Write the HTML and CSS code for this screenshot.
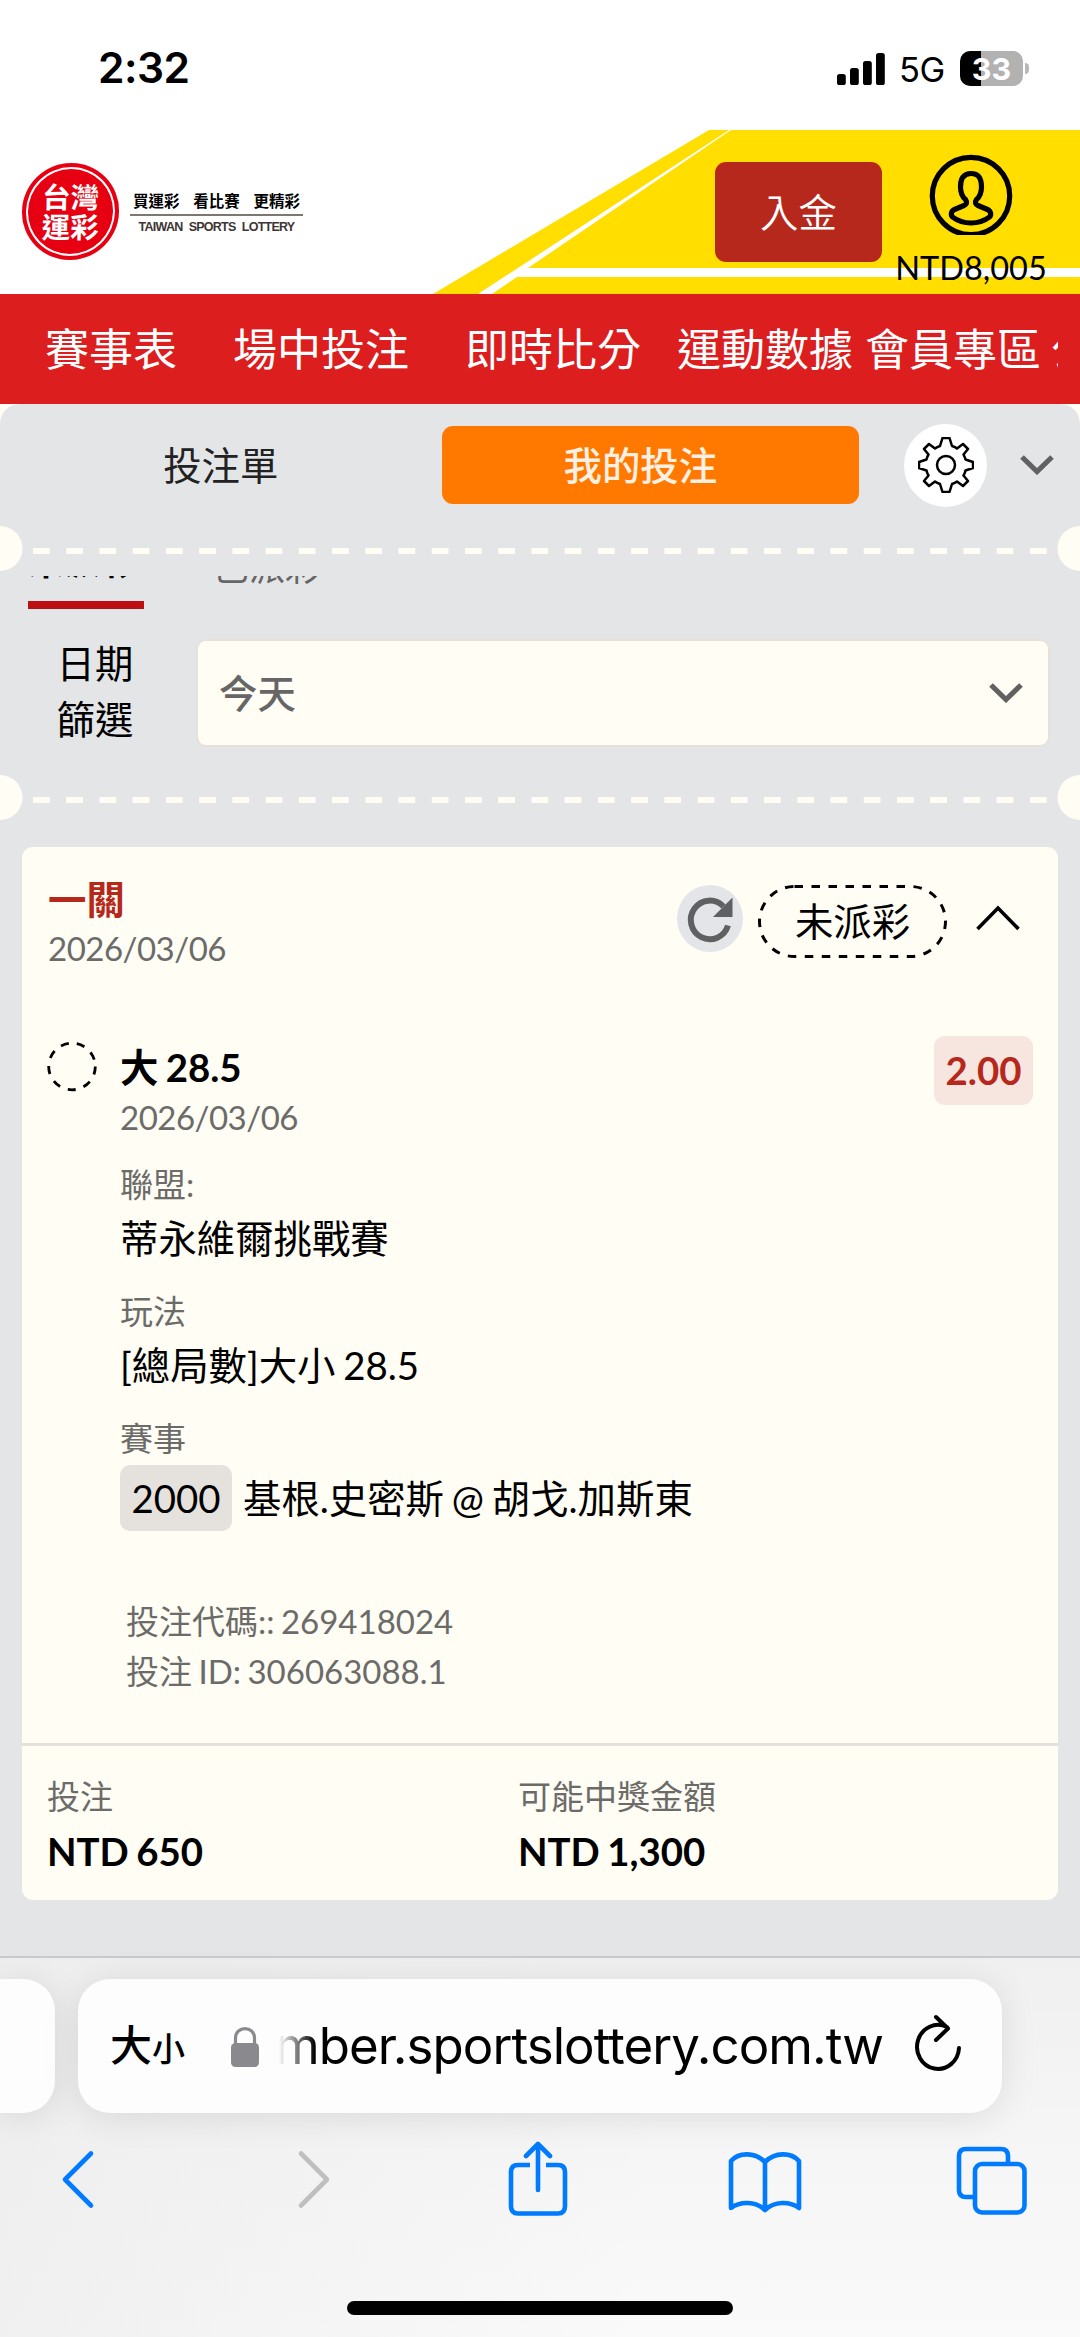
FILE: index.html
```html
<!DOCTYPE html>
<html lang="zh-Hant">
<head>
<meta charset="utf-8">
<title>台灣運彩</title>
<link rel="stylesheet" href="styles.css">
</head>
<body>
<div class="status">
  <span class="clock">2:32</span>
  <div class="status-right">
    <svg class="signal" width="48" height="32" viewBox="0 0 48 32"><rect x="0" y="21" width="8.8" height="11" rx="2.6"/><rect x="13" y="15" width="8.8" height="17" rx="2.6"/><rect x="26" y="8" width="8.8" height="24" rx="2.6"/><rect x="39" y="0" width="8.8" height="32" rx="2.6"/></svg>
    <span class="net">5G</span>
    <div class="battery">33</div>
    <i class="tip"></i>
  </div>
</div>

<header class="header">
  <svg class="rays" width="1080" height="164" viewBox="0 0 1080 164"><path fill="#ffde00" d="M433 164 709 0H1080V164Z"/><path fill="#fff" d="M478 164 729 0H731L528 138H1080V147H517L492 164Z"/></svg>
  <div class="brand">
    <div class="seal"><span>台灣</span><span>運彩</span></div>
    <div class="slogan"><span class="slogan-zh"><b>買運彩</b><b>看比賽</b><b>更精彩</b></span><span class="slogan-en">TAIWAN SPORTS LOTTERY</span></div>
  </div>
  <button class="deposit">入金</button>
  <div class="account">
    <svg width="84" height="81" viewBox="0 0 84 81" fill="none" stroke="#000" stroke-width="5.2"><circle cx="42" cy="42" r="38.7"/><path d="M42 19.500C34 19.500 31.500 25 31.500 33C31.500 39 33 42.500 36.500 45.500C38.500 48.500 37.500 50.500 35 51.500L25.500 55.500C22 57 21.500 61 23.500 63C34 71 50 71 60.500 63C62.500 61 62 57 58.500 55.500L49 51.500C46.500 50.500 45.500 48.500 47.500 45.500C51 42.500 52.500 39 52.500 33C52.500 25 50 19.500 42 19.500Z"/></svg>
    <span class="balance">NTD8,005</span>
  </div>
</header>

<nav class="nav"><div class="nav-scroll">
  <a class="n1">賽事表</a><a class="n1">場中投注</a><a class="n2">即時比分</a><a class="n3">運動數據</a><a class="n4">會員專區</a><a>公益</a>
</div></nav>

<main class="backdrop"><div class="panel">
  <div class="switch">
    <div class="slip">投注單</div>
    <div class="mine">我的投注</div>
    <div class="gear"><svg width="56" height="56" viewBox="-28 -28 56 56" fill="none" stroke="#000" stroke-width="2.500" stroke-linejoin="round"><circle r="9"/><path d="M-3.500-27H3.500L6-19Q9.500-18 11-16.500L17-21L22-16L17.500-10.500Q19-7.500 19.500-5.500L27-3V3L19.500 5.500Q19 8 17.500 10.500L22 16L17 21L11 16.500Q9 18 6 19L3.500 27H-3.500L-6 19Q-9 18-11 16.500L-17 21L-22 16L-17.500 10.500Q-19 8-19.500 5.500L-27 3V-3L-19.500-5.500Q-19-8-17.500-10.500L-22-16L-17-21L-11-16.500Q-9-18-6-19Z"/></svg></div>
    <svg class="chev" width="34" height="20" viewBox="0 0 34 20"><path d="M2 2 17 16.500 32 2"/></svg>
  </div>
  <div class="perf"><svg width="1080" height="46" viewBox="0 0 1080 46"><circle cx="0" cy="22.500" r="22.500"/><circle cx="1080" cy="22.500" r="22.500"/><path d="M33 25H1048"/></svg></div>
  <div class="tabs"><span class="tab on">未派彩</span><span class="tab">已派彩</span></div>
  <div class="filter">
    <span class="filter-label">日期篩選</span>
    <div class="select"><span>今天</span><svg class="chev" width="34" height="20" viewBox="0 0 34 20"><path d="M2 2 17 16.500 32 2"/></svg></div>
  </div>
  <div class="perf"><svg width="1080" height="46" viewBox="0 0 1080 46"><circle cx="0" cy="22.500" r="22.500"/><circle cx="1080" cy="22.500" r="22.500"/><path d="M33 25H1048"/></svg></div>

  <article class="card">
    <div class="card-head">
      <div class="card-title"><h2>一關</h2><span class="date">2026/03/06</span></div>
      <svg class="refresh" width="66" height="67" viewBox="0 0 66 67"><ellipse cx="33" cy="33.500" rx="33" ry="33.500" fill="#e4e5e8"/><path d="M51 40.500A19 19.300 0 1 1 46.500 21.500" fill="none" stroke="#5f6062" stroke-width="6"/><path d="M55.500 12.500V32H36Z" fill="#5f6062"/></svg>
      <div class="state"><svg width="189" height="73" viewBox="0 0 189 73"><rect x="1.500" y="1.500" width="186" height="70" rx="35"/></svg><span>未派彩</span></div>
      <svg class="up" width="44" height="26" viewBox="0 0 44 26"><path d="M1.500 24 22 3 42.500 24"/></svg>
    </div>
    <div class="bet">
      <svg class="ring" width="50" height="51" viewBox="0 0 50 51"><circle cx="25" cy="25.500" r="23.300"/></svg>
      <div class="detail">
        <div class="pick"><strong>大 28.5</strong><span class="date">2026/03/06</span></div>
        <span class="k">聯盟:</span><span class="v">蒂永維爾挑戰賽</span>
        <span class="k">玩法</span><span class="v">[總局數]大小 28.5</span>
        <span class="k">賽事</span><div class="match"><span class="chip">2000</span><span>基根.史密斯 @ 胡戈.加斯東</span></div>
        <div class="ids"><span>投注代碼:: 269418024</span><span>投注 ID: 306063088.1</span></div>
      </div>
      <span class="odds">2.00</span>
    </div>
    <div class="totals">
      <div><span class="k">投注</span><strong>NTD 650</strong></div>
      <div><span class="k">可能中獎金額</span><strong>NTD 1,300</strong></div>
    </div>
  </article>
</div></main>

<footer class="browser">
  <div class="address-row">
    <div class="prev-page"></div>
    <div class="address">
      <span class="aa">大<small>小</small></span>
      <svg class="lock" width="28" height="41" viewBox="0 0 28 41"><path d="M4.500 19V12C4.500-.5 23.500-.5 23.500 12V19" fill="none" stroke="#8a898e" stroke-width="3.200"/><rect y="17" width="28" height="24" rx="4.500" fill="#8a898e"/></svg>
      <span class="url">mber.sportslottery.com.tw</span>
      <svg class="reload" width="48" height="58" viewBox="0 0 48 58"><path d="M33 13A21 22 0 1 0 45 34M22 3 34 14.500 22 26"/></svg>
    </div>
    <div class="next-page"></div>
  </div>
  <div class="tools">
    <svg class="back" width="34" height="76" viewBox="0 0 34 76"><path d="M30 12.500 4 38.500 30 64.500"/></svg>
    <svg class="forward" width="34" height="76" viewBox="0 0 34 76"><path d="M4 12.500 30 38.500 4 64.500"/></svg>
    <svg class="share" width="60" height="76" viewBox="0 0 60 76"><path d="M22 24H10Q3 24 3 31V65Q3 72.500 10 72.500H50Q57 72.500 57 65V31Q57 24 50 24H38" stroke-linecap="butt"/><path d="M30 49V3M18 15 30 3 42 15"/></svg>
    <svg class="book" width="74" height="76" viewBox="0 0 74 76"><path d="M37 69V21C27 11 11 11 3 20V67C12 60 28 60 37 69C46 60 62 60 71 67V20C63 11 47 11 37 21"/></svg>
    <svg width="72" height="76" viewBox="0 0 72 76"><path d="M18 56H10Q3 56 3 49V15Q3 8 10 8H45Q52 8 52 15V22"/><rect x="19" y="23" width="49.500" height="48.500" rx="7"/></svg>
  </div>
  <div class="home"></div>
</footer>
</body>
</html>
```
FILE: styles.css
```css
* { box-sizing: border-box; }
body {
  margin: 0;
  width: 1080px;
  height: 2337px;
  display: flex;
  flex-direction: column;
  overflow: hidden;
  background: #fff;
  color: #000;
  font: 38.400px/56px Lato, "Noto Sans CJK TC", sans-serif;
  word-spacing: -2px;
}
svg { display: block; flex: none; }
h2, strong { margin: 0; font-size: 38.400px; font-weight: 700; }

.status { flex: none; height: 130px; padding: 0 51px 0 98px; display: flex; justify-content: space-between; align-items: center; font-family: Inter, sans-serif; }
.clock { font-size: 42.500px; font-weight: 600; line-height: 60px; margin-top: 6px; letter-spacing: -.5px; }
.status-right { display: flex; align-items: center; margin-top: 7px; }
.net { font-size: 34.500px; line-height: 40px; margin: 3px 0 0 14px; width: 47px; letter-spacing: -.5px; }
.battery { width: 63px; height: 35px; margin-left: 14px; border-radius: 10px; background: linear-gradient(90deg, #000 21px, #b2b2b2 21px); color: #fff; font-size: 30.500px; font-weight: 700; line-height: 35px; text-align: center; }
.tip { width: 4px; height: 11px; margin-left: 2px; border-radius: 0 5px 5px 0; background: #b8b8b8; }

.header { position: relative; flex: none; height: 164px; display: flex; align-items: flex-start; padding-left: 22px; }
.rays { position: absolute; left: 0; top: 0; z-index: -1; }
.brand { display: flex; align-items: center; width: 693px; margin-top: 33px; }
.seal { width: 97px; height: 97px; border-radius: 50%; background: #e60012; box-shadow: inset 0 0 0 4px #e60012, inset 0 0 0 6px #fff; display: flex; flex-direction: column; align-items: center; justify-content: center; color: #fff; font-size: 28.500px; font-weight: 700; line-height: 30px; transform: skewX(-1deg); }
.slogan { width: 173px; margin: 4px 0 0 11px; }
.slogan-zh { display: flex; justify-content: space-between; padding: 0 3px; height: 23px; border-bottom: 2px solid #7d786f; font-size: 15.500px; line-height: 16px; }
.slogan-zh b { font-weight: 700; }
.slogan-en { display: block; font: 700 12.500px/16px "Liberation Sans", sans-serif; text-align: center; margin-top: 3px; color: #3e3533; word-spacing: 3.500px; white-space: nowrap; letter-spacing: -.75px; }
.deposit { width: 167px; height: 100px; margin-top: 32px; border: 0; padding: 0; border-radius: 11px; background: #b6281b; color: #fff; font: 350 38.400px/100px Lato, "Noto Sans CJK TC", sans-serif; }
.account { width: 178px; display: flex; flex-direction: column; align-items: center; margin-top: 24px; }
.balance { font-size: 32.500px; line-height: 40px; margin-top: 13px; }

.nav { flex: none; height: 110px; padding: 0 22px 0 0; background: #dc1e1f; }
.nav-scroll { height: 110px; padding-left: 45px; display: flex; overflow: hidden; white-space: nowrap; color: #fff; font-size: 44px; font-weight: 400; line-height: 110px; }
.n1 { margin-right: 56px; }
.n2 { margin-right: 36px; }
.n3 { margin-right: 12px; }
.n4 { margin-right: 10px; }

.backdrop { flex: none; height: 1552px; background: #fffdf4; }
.panel { height: 1552px; border-radius: 20px 20px 0 0; background: #e4e5e7; }
.switch { height: 122px; padding-right: 26px; display: flex; align-items: center; }
.slip { width: 442px; text-align: center; color: #222; }
.mine { width: 418px; height: 78px; padding-right: 20px; border-radius: 11px; background: #ff7900; color: #fff0e4; font-weight: 500; line-height: 78px; text-align: center; }
.gear { width: 83px; height: 83px; margin: 0 33px 0 45px; border-radius: 50%; background: #fff; display: flex; align-items: center; justify-content: center; }
.chev { fill: none; stroke: #616161; stroke-width: 5.200; }
.perf { height: 46px; fill: #fffdf4; }
.perf path { stroke: #fffdf4; stroke-width: 6; stroke-dasharray: 16.700 16.530; }
.tabs { height: 40px; margin-top: 4px; padding-left: 28px; display: flex; overflow: hidden; font-size: 36px; line-height: 0; }
.tab { height: 33px; margin: -26px 0 0 69px; display: flex; align-items: center; color: #666; }
.tab.on { width: 116px; height: 62px; margin: -29px 0 0; padding-bottom: 27px; border-bottom: 8px solid #bb0f13; color: #000; font-weight: 700; }
.filter { display: flex; height: 110px; margin: 20px 0 29px; padding: 3px 30px 0 55px; }
.filter-label { width: 80px; margin: -4px 61px 0 0; text-align: center; line-height: 56px; overflow-wrap: anywhere; }
.select { flex: 1; height: 108px; padding: 0 25px 0 21px; display: flex; justify-content: space-between; align-items: center; border: 2px solid #e6e2db; border-radius: 10px; background: #fffdf4; color: #666; font-weight: 500; }

.card { height: 1053px; margin: 26px 22px 0; border-radius: 11px; background: #fffdf4; }
.card-head { height: 178px; padding: 26px 38px 0 26px; display: flex; }
.card-title { flex: 1; display: flex; flex-direction: column; }
h2 { color: #b6281b; line-height: 53px; }
.date { font-size: 33px; line-height: 44px; color: #6b6b69; letter-spacing: -.5px; }
.refresh { margin: 12px 15px 0 0; }
.state { position: relative; width: 189px; height: 73px; margin: 12px 29px 0 0; text-align: center; line-height: 72px; }
.state svg { position: absolute; left: 0; top: 0; fill: none; stroke: #000; stroke-width: 3; stroke-dasharray: 8.500 8.500; }
.up { margin-top: 32px; fill: none; stroke: #000; stroke-width: 3.600; }
.bet { height: 718px; padding: 0 25px 0 25px; display: flex; align-items: flex-start; }
.ring { margin-top: 16px; fill: none; stroke: #000; stroke-width: 2.800; stroke-dasharray: 8.140 8.140; }
.detail { flex: 1; margin-left: 23px; display: flex; flex-direction: column; }
.pick { display: flex; flex-direction: column; margin-top: 14px; height: 121px; }
.pick strong { line-height: 56px; }
.k { font-size: 33px; line-height: 48px; color: #6b6b69; }
.v { height: 79px; line-height: 60px; }
.match { display: flex; align-items: center; height: 68px; margin-top: 2px; white-space: nowrap; }
.chip { width: 112px; height: 66px; margin-right: 11px; border-radius: 10px; background: #e5e1dc; text-align: center; line-height: 66px; }
.ids { display: flex; flex-direction: column; margin: 64px 0 0 6px; font-size: 33px; line-height: 50px; color: #6b6b69; }
.odds { width: 99px; height: 69px; margin-top: 11px; border-radius: 11px; background: #f7e6e0; color: #b6281b; font-weight: 700; line-height: 69px; text-align: center; }
.totals { display: flex; height: 157px; border-top: 3px solid #e4e0dc; padding: 26px 0 0 25px; }
.totals div { width: 471px; display: flex; flex-direction: column; }
.totals strong { margin-top: 3px; }

.browser { flex: none; height: 381px; border-top: 2px solid #c9cacc; background: linear-gradient(100deg, rgba(238,238,238,.9), rgba(248,248,248,.2) 60%), linear-gradient(#eeeeee, #f5f5f5 50%, #fafafa); }
.address-row { display: flex; justify-content: space-between; padding-top: 21px; height: 155px; }
.prev-page { width: 55px; height: 134px; border-radius: 0 32px 32px 0; background: #fdfdfd; box-shadow: 0 4px 36px rgba(0,0,0,.1); }
.next-page { width: 55px; }
.address { width: 924px; height: 134px; border-radius: 32px; background: #fdfdfd; box-shadow: 0 4px 36px rgba(0,0,0,.1); display: flex; align-items: center; padding-left: 32px; }
.aa { width: 121px; font-size: 42px; font-weight: 500; white-space: nowrap; }
.aa small { font-size: 33px; }
.url { width: 604px; margin-left: 20px; display: flex; justify-content: flex-end; overflow: hidden; font: 400 51px/70px Inter, sans-serif; letter-spacing: -.95px; -webkit-mask-image: linear-gradient(90deg, transparent, #000 36px); mask-image: linear-gradient(90deg, transparent, #000 36px); }
.reload { margin: -6px 0 0 31px; fill: none; stroke: #000; stroke-width: 4; stroke-linecap: round; stroke-linejoin: round; }
.tools { height: 110px; padding: 28px 0 0 61px; display: flex; fill: none; stroke: #007aff; stroke-width: 4.600; stroke-linecap: round; stroke-linejoin: round; }
.back { margin-right: 202px; }
.forward { margin-right: 177px; stroke: #bfbfbf; }
.share { margin-right: 160px; }
.book { margin-right: 154px; }
.home { width: 386px; height: 14px; margin: 78px auto 0; border-radius: 7px; background: #000; }
```
